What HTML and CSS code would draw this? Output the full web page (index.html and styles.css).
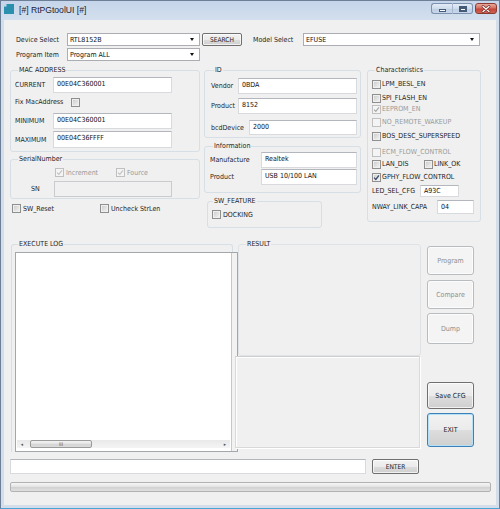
FILE: index.html
```html
<!DOCTYPE html>
<html lang="en">
<head>
<meta charset="utf-8">
<title>RtPGtoolUI</title>
<link rel="stylesheet" href="styles.css">
</head>
<body>
<div class="window">
  <div class="titlebar">
    <svg class="appicon" width="10" height="10" viewBox="0 0 10 10"><path d="M0 2.5 L2.5 0 L10 0 L10 10 L0 10 Z" fill="#2b8fae"/><path d="M0 2.5 L2.5 2.5 L2.5 0 Z" fill="#c9ecf5"/></svg>
    <span class="title">[#] RtPGtoolUI [#]</span>
    <div class="capbtns">
      <span class="cap cap-min"><i class="g-min"></i></span>
      <span class="cap cap-max"><i class="g-max"></i></span>
      <span class="cap cap-close"><svg width="10" height="8" viewBox="0 0 10 8"><path d="M2 1.5 L8 6.5 M8 1.5 L2 6.5" stroke="#6b2a24" stroke-width="2.6" stroke-linecap="round"/><path d="M2 1.5 L8 6.5 M8 1.5 L2 6.5" stroke="#ffffff" stroke-width="1.3" stroke-linecap="round"/></svg></span>
    </div>
  </div>
  <div class="client">
    <div class="toprow">
      <span class="lbl-top">Device Select</span>
      <div class="combo combo-dev"><span>RTL8152B</span><i class="arrow"></i></div>
      <button class="btn btn-search">SEARCH</button>
      <span class="lbl-model">Model Select</span>
      <div class="combo combo-model"><span>EFUSE</span><i class="arrow"></i></div>
    </div>
    <div class="toprow row2">
      <span class="lbl-top">Program Item</span>
      <div class="combo combo-dev"><span>Program ALL</span><i class="arrow"></i></div>
    </div>

    <div class="mid">
      <div class="col col-left">
        <fieldset class="grp grp-mac">
          <legend>MAC ADDRESS</legend>
          <div class="frow r-cur"><span class="flbl">CURRENT</span><div class="tb tb-mac">00E04C360001</div></div>
          <div class="frow r-fix"><span class="flbl-fix">Fix MacAddress</span><span class="cb"></span></div>
          <div class="frow r-min"><span class="flbl">MINIMUM</span><div class="tb tb-mac">00E04C360001</div></div>
          <div class="frow r-max"><span class="flbl">MAXIMUM</span><div class="tb tb-mac tb-17">00E04C36FFFF</div></div>
        </fieldset>
        <fieldset class="grp grp-serial">
          <legend>SerialNumber</legend>
          <div class="srow dis">
            <span class="inc"><span class="cb cb-dis"><svg width="7" height="7" viewBox="0 0 7 7"><path d="M1 3.6 L2.8 5.4 L6 1.3" fill="none" stroke="#c4c4c4" stroke-width="1.2"/></svg></span><span>Increment</span></span>
            <span class="cb cb-dis"><svg width="7" height="7" viewBox="0 0 7 7"><path d="M1 3.6 L2.8 5.4 L6 1.3" fill="none" stroke="#c4c4c4" stroke-width="1.2"/></svg></span><span>Fource</span>
          </div>
          <div class="frow r-sn"><span class="flbl-sn">SN</span><div class="tb tb-sn tb-dis"></div></div>
        </fieldset>
        <div class="chkrow">
          <span class="cbw cbw-reset"><span class="cb"></span><span>SW_Reset</span></span>
          <span class="cbw"><span class="cb"></span><span>Uncheck StrLen</span></span>
        </div>
      </div>

      <div class="col col-mid">
        <fieldset class="grp grp-id">
          <legend>ID</legend>
          <div class="frow r-ven"><span class="ilbl">Vendor</span><div class="tb tb-id">0BDA</div></div>
          <div class="frow r-prd"><span class="ilbl">Product</span><div class="tb tb-id">8152</div></div>
          <div class="frow r-bcd"><span class="ilbl ilbl-bcd">bcdDevice</span><div class="tb tb-bcd">2000</div></div>
        </fieldset>
        <fieldset class="grp grp-info">
          <legend>Information</legend>
          <div class="frow r-man"><span class="nlbl">Manufacture</span><div class="tb tb-info">Realtek</div></div>
          <div class="frow r-iprd"><span class="nlbl">Product</span><div class="tb tb-info">USB 10/100 LAN</div></div>
        </fieldset>
        <fieldset class="grp grp-swf">
          <legend>SW_FEATURE</legend>
          <div class="cbw cbw-dock"><span class="cb"></span><span>DOCKING</span></div>
        </fieldset>
      </div>

      <fieldset class="grp grp-chars">
        <legend>Characteristics</legend>
        <div class="ck ck-lpm"><span class="cb"></span><span>LPM_BESL_EN</span></div>
        <div class="ck ck-spi"><span class="cb"></span><span>SPI_FLASH_EN</span></div>
        <div class="ck ck-eep dis"><span class="cb cb-dis"><svg width="7" height="7" viewBox="0 0 7 7"><path d="M1 3.6 L2.8 5.4 L6 1.3" fill="none" stroke="#a8a8a8" stroke-width="1.2"/></svg></span><span>EEPROM_EN</span></div>
        <div class="ck ck-nor dis"><span class="cb cb-dis"></span><span>NO_REMOTE_WAKEUP</span></div>
        <div class="ck ck-bos"><span class="cb"></span><span>BOS_DESC_SUPERSPEED</span></div>
        <div class="ck ck-ecm dis"><span class="cb cb-dis"></span><span>ECM_FLOW_CONTROL</span></div>
        <div class="ck ck-lan"><span class="ck-half"><span class="cb"></span><span>LAN_DIS</span></span><span class="cb"></span><span>LINK_OK</span></div>
        <div class="ck ck-gphy"><span class="cb"><svg width="7" height="7" viewBox="0 0 7 7"><path d="M1 3.6 L2.8 5.4 L6 1.3" fill="none" stroke="#3c4a6a" stroke-width="1.3"/></svg></span><span>GPHY_FLOW_CONTROL</span></div>
        <div class="kv kv-led"><span class="kv-lbl kv-lbl-led">LED_SEL_CFG</span><div class="tb tb-led">A93C</div></div>
        <div class="kv kv-nway"><span class="kv-lbl kv-lbl-nway">NWAY_LINK_CAPA</span><div class="tb tb-nway">04</div></div>
      </fieldset>
    </div>

    <div class="lower">
      <fieldset class="grp grp-log">
        <legend>EXECUTE LOG</legend>
        <div class="listbox">
          <div class="lb-body">
            <div class="lb-white"></div>
            <div class="hscroll">
              <span class="sb-arrow">&#9666;</span>
              <span class="sb-thumb">III</span>
              <span class="sb-track"></span>
              <span class="sb-arrow">&#9656;</span>
            </div>
          </div>
          <div class="lb-strip"></div>
        </div>
      </fieldset>
      <div class="result-col">
        <fieldset class="grp grp-result">
          <legend>RESULT</legend>
        </fieldset>
        <div class="result-panel"></div>
      </div>
      <div class="btncol">
        <button class="btn btn-big btn-dis b-prog">Program</button>
        <button class="btn btn-big btn-dis b-cmp">Compare</button>
        <button class="btn btn-big btn-dis b-dump">Dump</button>
        <button class="btn btn-big b-save">Save CFG</button>
        <button class="btn btn-big btn-focus b-exit">EXIT</button>
      </div>
    </div>

    <div class="cmdrow">
      <div class="tb tb-cmd"></div>
      <button class="btn btn-enter">ENTER</button>
    </div>
    <div class="progress"><div class="progress-fill"></div></div>
  </div>
</div>
</body>
</html>
```

FILE: styles.css
```css
* { box-sizing: border-box; }
html, body { margin: 0; padding: 0; }
body {
  width: 500px; height: 509px; overflow: hidden; background: #ffffff;
  font-family: "DejaVu Sans Condensed", "DejaVu Sans", sans-serif;
  font-stretch: condensed;
  font-size: 7px; color: #1e1e1e;
}

/* ---------- window frame ---------- */
.window {
  width: 500px; height: 509px;
  border: 1px solid #6c7f96;
  border-bottom-color: #4aa3d6;
  background: #d3deea;
  padding: 0 3px 3px;
  display: flex; flex-direction: column;
}
.titlebar {
  height: 19px; flex: none;
  margin: 0 -3px; padding: 0 2px 0 2px;
  display: flex; align-items: center;
  background: linear-gradient(#c5d5ea, #d3dfee);
}
.appicon { flex: none; margin: -4px 0 0 1px; }
.title {
  margin-left: 5px; margin-top: -2px;
  font-family: "Liberation Sans", Arial, sans-serif;
  font-size: 8.6px; color: #1b2433;
}
.capbtns { margin-left: auto; margin-top: -4px; display: flex; align-items: center; }
.cap {
  height: 11px; display: flex; align-items: center; justify-content: center;
  border: 1px solid #7d92ae;
  background: linear-gradient(#e4ecf6, #cfdcec 50%, #bccde3 51%, #c9d7ea);
}
.cap-min { width: 22px; border-radius: 3px 0 0 3px; border-right-color: #a8b8cc; }
.cap-max { width: 20px; border-radius: 0 3px 3px 0; border-left: 0; margin-right: 2px; }
.cap-close {
  width: 22px; border-radius: 3px;
  border-color: #8c3b33;
  background: linear-gradient(#e9a99c, #d4705f 45%, #c2463a 55%, #cf6452);
}
.g-min { display: block; width: 7px; height: 3px; margin-top: 4px; background: #fff; border: 1px solid #445a78; }
.g-max { display: block; width: 8px; height: 6px; background: #fff; border: 1px solid #445a78; border-top-width: 2px; box-shadow: inset 0 0 0 1px #445a78; }

.client {
  flex: 1; background: #f0f0f0;
  display: flex; flex-direction: column;
}

/* ---------- generic controls ---------- */
.combo {
  height: 13px; background: #fff;
  border: 1px solid #abadb3;
  display: flex; align-items: center; justify-content: space-between;
  padding: 0 5px 0 2px; color: #111;
}
.arrow {
  width: 0; height: 0;
  border-left: 2.5px solid transparent; border-right: 2.5px solid transparent;
  border-top: 3px solid #111;
}
.tb {
  height: 16px; background: #fff;
  border: 1px solid #d8dade; border-top-color: #b3b6bc;
  padding: 2px 0 0 3px; line-height: 9px; color: #111;
  white-space: nowrap;
}
.tb-dis { background: #f0f0f0; border-color: #c9cbce; }
.btn {
  font: inherit; color: #1e1e1e; padding: 0; margin: 0;
  border: 1px solid #707070; border-radius: 2px;
  background: linear-gradient(#f2f2f2, #ebebeb 50%, #dddddd 51%, #cfcfcf);
  box-shadow: inset 0 0 0 1px rgba(255,255,255,0.7);
}
.btn-dis {
  border-color: #b8bcbf; color: #8e8e8e;
  background: #f4f4f4;
}
.btn-focus { border-color: #3c80b6; box-shadow: inset 0 0 0 1px #b4e1f8; }

.cb {
  flex: none; width: 9px; height: 9px;
  border: 1px solid #8f8f8f;
  background: linear-gradient(135deg, #c9c9c9, #f5f5f5);
  box-shadow: inset 0 0 0 1px #efefef;
  display: inline-flex; align-items: center; justify-content: center;
}
.cb-dis { border-color: #c0c0c0; background: #f4f4f4; box-shadow: none; }
.dis { color: #9a9a9a; }

/* ---------- top rows ---------- */
.toprow { display: flex; align-items: center; height: 13px; margin-top: 13px; padding-left: 12px; }
.toprow.row2 { margin-top: 2px; }
.lbl-top { width: 51px; }
.combo-dev { width: 133px; }
.btn-search { width: 40px; height: 13px; margin-left: 2px; font-size: 6.6px; }
.lbl-model { width: 50px; margin-left: 11px; }
.combo-model { width: 177px; }

/* ---------- group boxes ---------- */
.grp {
  margin: 0; padding: 0 4px;
  border: 1px solid #d5dfe5; border-radius: 3px;
  min-width: 0;
}
.grp > legend {
  padding: 0 1px; margin-left: 3px;
  height: 10px; line-height: 10px; color: #1e1e1e;
}

.mid {
  margin-top: 4px; padding-left: 6px;
  display: grid; grid-template-columns: 190px 157px 116px; column-gap: 4px;
  align-items: start;
}
.mid .grp-chars { margin-left: 2px; }

.frow { display: flex; align-items: center; }

/* MAC */
.grp-mac { height: 87px; }
.flbl { width: 38px; }
.tb-mac { width: 119px; }
.tb-17 { height: 17px; }
.r-cur { margin-top: 2px; }
.r-fix { margin-top: 2px; height: 14px; }
.flbl-fix { width: 56px; }
.r-min { margin-top: 4px; }
.r-max { margin-top: 2px; }

/* Serial */
.grp-serial { margin-top: 2px; height: 45px; }
.srow { display: flex; align-items: center; height: 9px; margin-top: 4px; padding-left: 40px; gap: 2px; }
.inc { display: flex; align-items: center; gap: 2px; width: 59px; }
.r-sn { margin-top: 4px; }
.flbl-sn { width: 39px; padding-left: 16px; }
.tb-sn { width: 118px; }

.chkrow { display: flex; align-items: center; height: 9px; margin-top: 5px; padding-left: 2px; }
.cbw { display: flex; align-items: center; gap: 2px; }
.cbw-reset { width: 88px; }

/* ID */
.grp-id { height: 73px; padding-left: 6px; padding-right: 3px; }
.ilbl { width: 27px; }
.ilbl-bcd { width: 38px; }
.tb-id { width: 119px; }
.tb-bcd { width: 108px; height: 15px; }
.r-ven { margin-top: 3px; }
.r-prd { margin-top: 4px; }
.r-bcd { margin-top: 6px; }

/* Information */
.grp-info { margin-top: 3px; height: 52px; padding-left: 5px; padding-right: 3px; }
.nlbl { width: 51px; }
.tb-info { width: 96px; }
.r-man { margin-top: 1px; }
.r-iprd { margin-top: 1px; }

/* SW_FEATURE */
.grp-swf { margin-top: 3px; margin-left: 3px; width: 115px; height: 32px; }
.grp-swf > legend { margin-left: 1px; }
.cbw-dock { margin-top: 4px; height: 9px; }

/* Characteristics */
.grp-chars { height: 157px; }
.ck { display: flex; align-items: center; gap: 1px; height: 10px; }
.ck-half { display: flex; align-items: center; gap: 1px; width: 51px; }
.ck-lpm { margin-top: 4px; }
.ck-spi { margin-top: 4px; }
.ck-eep { margin-top: 1px; }
.ck-nor { margin-top: 3px; }
.ck-bos { margin-top: 4px; }
.ck-ecm { margin-top: 6px; }
.ck-lan { margin-top: 2px; }
.ck-gphy { margin-top: 3px; }
.kv { display: flex; align-items: center; }
.kv-led { margin-top: 3px; }
.kv-nway { margin-top: 3px; }
.kv-lbl-led { width: 48px; }
.kv-lbl-nway { width: 65px; }
.tb-led { width: 39px; height: 12px; padding-top: 1px; }
.tb-nway { width: 37px; height: 14px; padding-top: 2px; }

/* ---------- lower area ---------- */
.lower {
  margin-top: 11px; padding-left: 7px; height: 215px;
  display: grid; grid-template-columns: 227px 189px 47px;
  align-items: start;
}
.grp-log { width: 222px; height: 213px; border-bottom: 0; border-radius: 3px 3px 0 0; padding: 0 0 0 3px; }
.listbox {
  width: 223px; height: 200px; margin-top: 3px;
  border: 1px solid #a3a6ab;
  background: #fff;
  display: flex;
}
.lb-body { flex: 1; display: flex; flex-direction: column; padding-bottom: 3px; border-right: 1px solid #c6c8cb; }
.lb-white { flex: 1; }
.hscroll {
  height: 8px; margin: 0 1px; display: flex; align-items: center;
  background: linear-gradient(#e9e9e9, #f4f4f4);
  color: #555; font-size: 5px;
}
.sb-arrow { width: 10px; text-align: center; }
.sb-thumb {
  width: 62px; height: 8px; margin-left: 3px;
  border: 1px solid #9a9a9a; border-radius: 2px;
  background: linear-gradient(#f4f4f4, #e2e2e2 50%, #d4d4d4 51%, #dcdcdc);
  text-align: center; line-height: 6px; font-size: 5px; color: #555;
}
.sb-track { flex: 1; }
.lb-strip { width: 5px; background: #f2f2f2; }

.result-col { display: flex; flex-direction: column; }
.grp-result { width: 183px; height: 117px; border-color: #e0e3e6; }
.result-panel {
  width: 185px; height: 92px; margin-left: -3px;
  background: #f0f0f0;
  border: 1px solid #d9d9d9; border-top-color: #cfcfcf;
  box-shadow: inset 1px 1px 0 #ffffff, 1px 1px 0 #ffffff;
}

.btncol { display: flex; flex-direction: column; padding-top: 7px; }
.btn-big { width: 47px; font-size: 7px; border-radius: 3px; }
.b-prog { height: 29px; }
.b-cmp { height: 29px; margin-top: 5px; }
.b-dump { height: 31px; margin-top: 4px; }
.b-save { height: 27px; margin-top: 38px; }
.b-exit { height: 34px; margin-top: 4px; }

/* ---------- bottom ---------- */
.cmdrow { display: flex; align-items: center; margin-top: 5px; padding-left: 6px; }
.tb-cmd { width: 356px; height: 15px; }
.btn-enter { width: 47px; height: 15px; margin-left: 6px; font-size: 6.6px; }
.progress {
  margin: 8px 0 0 6px; width: 481px; height: 10px;
  border: 1px solid #b2b2b2; border-radius: 2px;
  background: linear-gradient(#f7f7f7, #e4e4e4 45%, #d2d2d2 55%, #e0e0e0);
  padding: 1px;
}
.progress-fill { height: 100%; width: 0; }
```
